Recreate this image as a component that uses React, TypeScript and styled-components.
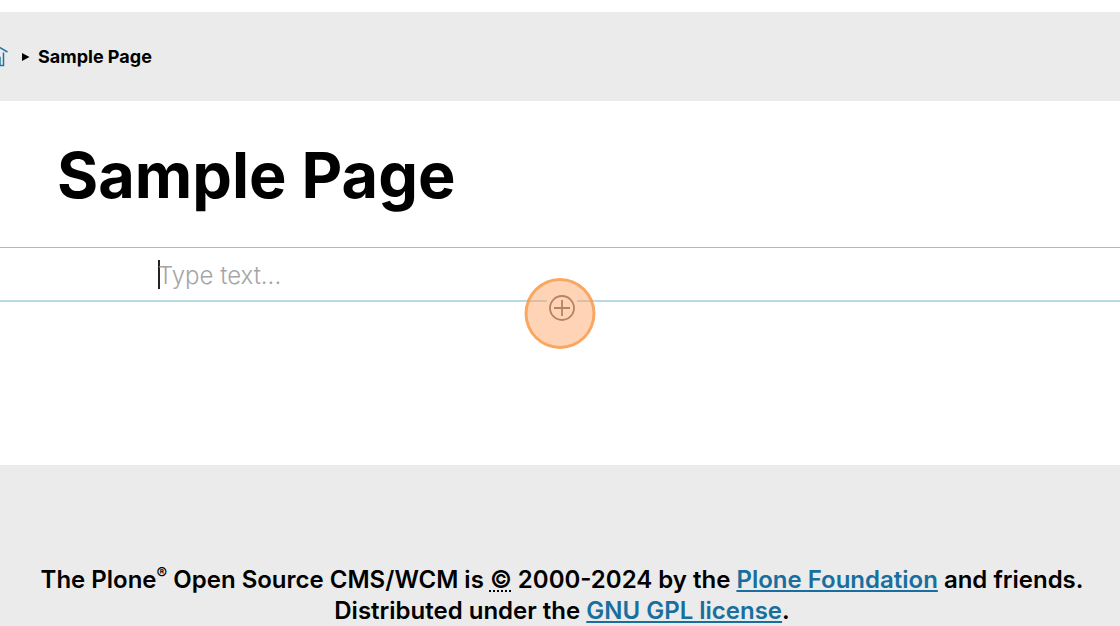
import React from "react";
import styled, { createGlobalStyle } from "styled-components";

const GlobalStyle = createGlobalStyle`
  *, *::before, *::after { box-sizing: border-box; }
  html, body { margin: 0; background: #fff; }
  body {
    font-family: Inter, "Liberation Sans", sans-serif;
    color: #000;
    overflow-x: hidden;
  }
`;

const Page = styled.div`
  display: flex;
  flex-direction: column;
  min-height: 100vh;
  padding-top: 12px;
`;

const Breadcrumbs = styled.nav`
  padding: 33px 0 32px;
  background: #ebebeb;
`;

const Crumbs = styled.ol`
  display: flex;
  align-items: center;
  height: 24px;
  margin: 0 0 0 -12px;
  padding: 0;
  list-style: none;
  font-size: 18px;
  line-height: 24px;
  font-weight: 700;
`;

const Crumb = styled.li`
  display: flex;
  align-items: center;
`;

const HomeLink = styled.a`
  display: flex;
  color: #2474a3;
`;

const Arrow = styled.svg`
  width: 8px;
  height: 8px;
  margin: 0 8px 0 14px;
`;

const Main = styled.main`
  flex: 1 0 auto;
  padding: 34px 0 161px;
`;

const Title = styled.h1`
  margin: 0 0 32px;
  padding: 0 57px;
  font-size: 63px;
  line-height: 80px;
  font-weight: 700;
`;

const Block = styled.div`
  position: relative;
  display: flex;
  align-items: center;
  height: 55px;
  padding: 0 158px;
  border-top: 1px solid #8fc6d4;
  border-bottom: 2px solid #b9d9e6;
`;

const Caret = styled.span`
  flex: none;
  width: 2px;
  height: 29px;
  margin-right: -2px;
  background: #222;
`;

const TextInput = styled.input`
  flex: 1;
  min-width: 0;
  height: 32px;
  padding: 2px 0 0;
  border: 0;
  outline: 0;
  background: transparent;
  font-family: inherit;
  font-size: 24px;
  font-weight: 300;
  line-height: 30px;
  color: #000;
  &::placeholder {
    color: #a5a5a5;
    opacity: 1;
  }
`;

const AddButton = styled.button`
  position: absolute;
  top: 45px;
  left: calc(50% + 2px);
  display: flex;
  padding: 1px;
  border: 0;
  background: #fff;
  color: #7d6a66;
  transform: translateX(-50%);
`;

const ClickMarker = styled.span`
  position: absolute;
  top: 30px;
  left: 50%;
  width: 71px;
  height: 71px;
  border: 3px solid rgba(247, 147, 61, 0.7);
  border-radius: 50%;
  background: rgba(255, 159, 94, 0.45);
  transform: translateX(-50%);
  pointer-events: none;
`;

const Footer = styled.footer`
  padding: 99px 0 0 4px;
  background: #ebebeb;
  text-align: center;
  font-size: 24px;
  line-height: 31px;
  font-weight: 600;
`;

const FooterText = styled.p`
  margin: 0;
`;

const Sup = styled.sup`
  font-size: 16px;
  line-height: 0;
`;

const Abbr = styled.abbr`
  text-decoration: underline dotted 2px;
  text-underline-offset: 2px;
  text-decoration-skip-ink: none;
`;

const FooterLink = styled.a`
  color: #186f9e;
  text-decoration: underline;
  text-decoration-thickness: 2px;
  text-underline-offset: 2px;
`;

export default function App() {
  return (
    <Page>
      <GlobalStyle />
      <Breadcrumbs aria-label="Breadcrumbs">
        <Crumbs>
          <Crumb>
            <HomeLink href="#" aria-label="Home">
              <svg width="20" height="22" viewBox="0 0 20 22" fill="none" stroke="currentColor" strokeWidth="1.5">
                <path d="M.5 6 10 .5 19.500 6M4.500 6.500v13h3.500v-8h4v8h3.500v-13" />
              </svg>
            </HomeLink>
          </Crumb>
          <Crumb aria-current="page">
            <Arrow viewBox="0 0 8 8" aria-hidden="true">
              <path d="M0 0 7.500 4 0 8Z" />
            </Arrow>
            Sample Page
          </Crumb>
        </Crumbs>
      </Breadcrumbs>
      <Main>
        <Title>Sample Page</Title>
        <Block>
          <Caret />
          <TextInput type="text" aria-label="Text block" placeholder="Type text..." />
          <AddButton type="button" aria-label="Add block">
            <svg width="28" height="28" viewBox="0 0 28 28" fill="none" stroke="currentColor" strokeWidth="1.8">
              <circle cx="14" cy="14" r="12" />
              <path d="M14 6v16M6 14h16" />
            </svg>
          </AddButton>
          <ClickMarker />
        </Block>
      </Main>
      <Footer>
        <FooterText>
          The Plone<Sup>®</Sup> Open Source CMS/WCM is <Abbr title="Copyright">©</Abbr> 2000-2024 by the{" "}
          <FooterLink href="#">Plone Foundation</FooterLink> and friends.
        </FooterText>
        <FooterText>
          Distributed under the <FooterLink href="#">GNU GPL license</FooterLink>.
        </FooterText>
      </Footer>
    </Page>
  );
}
